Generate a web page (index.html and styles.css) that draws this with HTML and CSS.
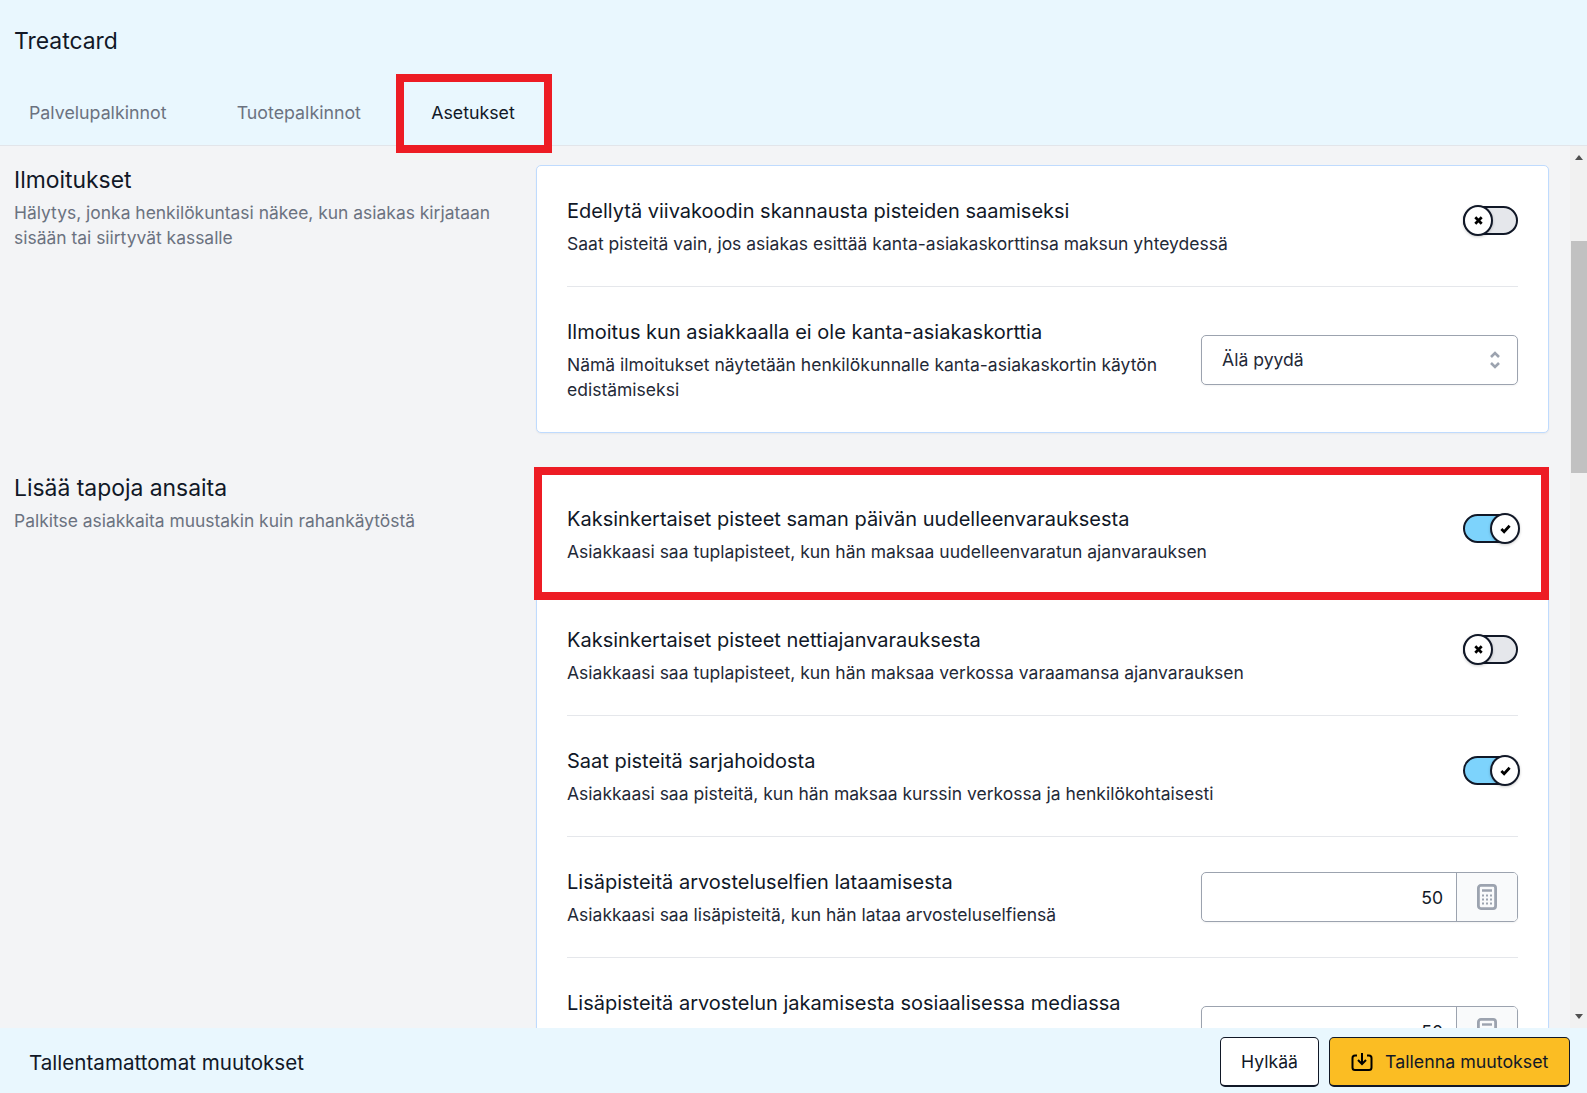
FILE: index.html
```html
<!DOCTYPE html>
<html lang="fi">
<head>
<meta charset="utf-8">
<title>Treatcard</title>
<link rel="stylesheet" href="styles.css">
</head>
<body>
<div class="app">
  <header class="top">
    <h1 class="brand">Treatcard</h1>
    <nav class="tabs">
      <a class="tab">Palvelupalkinnot</a>
      <a class="tab">Tuotepalkinnot</a>
      <a class="tab tab-active">Asetukset<span class="mark mark-tab"></span></a>
    </nav>
  </header>
  <div class="middle">
    <main class="content">
      <section class="section">
        <div class="intro">
          <h2 class="intro-title">Ilmoitukset</h2>
          <p class="intro-text">Hälytys, jonka henkilökuntasi näkee, kun asiakas kirjataan sisään tai siirtyvät kassalle</p>
        </div>
        <div class="card">
          <div class="row">
            <div class="row-text">
              <h3 class="row-title">Edellytä viivakoodin skannausta pisteiden saamiseksi</h3>
              <p class="row-desc">Saat pisteitä vain, jos asiakas esittää kanta-asiakaskorttinsa maksun yhteydessä</p>
            </div>
            <span class="toggle"><span class="knob"><svg class="glyph" viewBox="0 0 12 12"><path d="M2.5 2.5l7 7M9.5 2.5l-7 7"/></svg></span></span>
          </div>
          <div class="row row-last">
            <div class="row-text">
              <h3 class="row-title">Ilmoitus kun asiakkaalla ei ole kanta-asiakaskorttia</h3>
              <p class="row-desc">Nämä ilmoitukset näytetään henkilökunnalle kanta-asiakaskortin käytön edistämiseksi</p>
            </div>
            <div class="select">
              <span>Älä pyydä</span>
              <svg class="chevrons" viewBox="0 0 12 20"><path d="M2 7l4-4 4 4M2 13l4 4 4-4"/></svg>
            </div>
          </div>
        </div>
      </section>
      <section class="section">
        <div class="intro">
          <h2 class="intro-title">Lisää tapoja ansaita</h2>
          <p class="intro-text">Palkitse asiakkaita muustakin kuin rahankäytöstä</p>
        </div>
        <div class="card">
          <div class="row row-marked">
            <span class="mark mark-row"></span>
            <div class="row-text">
              <h3 class="row-title">Kaksinkertaiset pisteet saman päivän uudelleenvarauksesta</h3>
              <p class="row-desc">Asiakkaasi saa tuplapisteet, kun hän maksaa uudelleenvaratun ajanvarauksen</p>
            </div>
            <span class="toggle toggle-on"><span class="knob"><svg class="glyph" viewBox="0 0 12 12"><path d="M1.5 6.5l3 3 6-6.5"/></svg></span></span>
          </div>
          <div class="row">
            <div class="row-text">
              <h3 class="row-title">Kaksinkertaiset pisteet nettiajanvarauksesta</h3>
              <p class="row-desc">Asiakkaasi saa tuplapisteet, kun hän maksaa verkossa varaamansa ajanvarauksen</p>
            </div>
            <span class="toggle"><span class="knob"><svg class="glyph" viewBox="0 0 12 12"><path d="M2.5 2.5l7 7M9.5 2.5l-7 7"/></svg></span></span>
          </div>
          <div class="row">
            <div class="row-text">
              <h3 class="row-title">Saat pisteitä sarjahoidosta</h3>
              <p class="row-desc">Asiakkaasi saa pisteitä, kun hän maksaa kurssin verkossa ja henkilökohtaisesti</p>
            </div>
            <span class="toggle toggle-on"><span class="knob"><svg class="glyph" viewBox="0 0 12 12"><path d="M1.5 6.5l3 3 6-6.5"/></svg></span></span>
          </div>
          <div class="row">
            <div class="row-text">
              <h3 class="row-title">Lisäpisteitä arvosteluselfien lataamisesta</h3>
              <p class="row-desc">Asiakkaasi saa lisäpisteitä, kun hän lataa arvosteluselfiensä</p>
            </div>
            <div class="field">
              <span class="field-value">50</span>
              <span class="field-addon"><svg class="calc" viewBox="0 0 20 26"><rect x="1.4" y="1.4" width="17.2" height="23.2" rx="2.5"/><path class="calc-bar" d="M5 6.5h10"/><path class="calc-dots" d="M5 11.5h2M9 11.5h2M13 11.5h2M5 15.5h2M9 15.5h2M13 15.5h2M5 19.5h2M9 19.5h2M13 19.5h2"/></svg></span>
            </div>
          </div>
          <div class="row">
            <div class="row-text">
              <h3 class="row-title">Lisäpisteitä arvostelun jakamisesta sosiaalisessa mediassa</h3>
            </div>
            <div class="field field-low">
              <span class="field-value">50</span>
              <span class="field-addon"><svg class="calc" viewBox="0 0 20 26"><rect x="1.4" y="1.4" width="17.2" height="23.2" rx="2.5"/><path class="calc-bar" d="M5 6.5h10"/><path class="calc-dots" d="M5 11.5h2M9 11.5h2M13 11.5h2M5 15.5h2M9 15.5h2M13 15.5h2M5 19.5h2M9 19.5h2M13 19.5h2"/></svg></span>
            </div>
          </div>
        </div>
      </section>
    </main>
    <aside class="scrollbar">
      <span class="arrow arrow-up"></span>
      <span class="thumb"></span>
      <span class="arrow arrow-down"></span>
    </aside>
  </div>
  <footer class="bottom">
    <span class="bottom-text">Tallentamattomat muutokset</span>
    <div class="actions">
      <button class="btn">Hylkää</button>
      <button class="btn btn-primary">
        <svg class="save" viewBox="0 0 22 20"><path d="M6 3.5H4a2.5 2.5 0 0 0-2.5 2.5v9.5A2.5 2.5 0 0 0 4 18h14a2.5 2.5 0 0 0 2.5-2.5V6A2.5 2.5 0 0 0 18 3.5h-2"/><path d="M11 1v10M7 8l4 4 4-4"/></svg>
        Tallenna muutokset
      </button>
    </div>
  </footer>
</div>
</body>
</html>
```
FILE: styles.css
```css
* { box-sizing: border-box; }
html, body { margin: 0; height: 100%; overflow: hidden; }
body { font-family: Inter, "Noto Sans", sans-serif; color: #111827; background: #f3f4f6; }
h1, h2, h3, p { margin: 0; font-weight: 400; }

.app { height: 100vh; display: flex; flex-direction: column; }

.top { height: 146px; flex: none; background: #e9f7fe; border-bottom: 1px solid #e2e5ea; padding: 0 0 0 14px; display: flex; flex-direction: column; }
.brand { font-size: 22.9px; line-height: 28px; margin-top: 26.5px; }
.tabs { display: flex; gap: 14.2px; margin: 27.5px 0 0 -13px; }
.tab { position: relative; font-size: 17.8px; line-height: 28px; padding: 0 28px; color: #6b7280; white-space: nowrap; height: 63px; padding-top: 17px; }
.tab-active { color: #111827; }

.mark { position: absolute; border: 8px solid #ed1c24; pointer-events: none; z-index: 2; }
.mark-tab { left: -7px; right: -9px; top: -8px; bottom: -8px; }

.middle { flex: 1; min-height: 0; display: flex; overflow: hidden; }
.content { flex: 1; min-width: 0; overflow: hidden; padding: 19px 21px 0 14px; }
.scrollbar { width: 17px; flex: none; background: #f1f1f1; display: flex; flex-direction: column; align-items: flex-end; position: relative; }
.thumb { width: 16px; height: 232px; background: #c1c1c1; margin-top: 95px; }
.arrow { position: absolute; left: 5px; width: 0; height: 0; border-left: 4.5px solid transparent; border-right: 4.5px solid transparent; }
.arrow-up { top: 9px; border-bottom: 5px solid #505050; }
.arrow-down { bottom: 9px; border-top: 5px solid #505050; }

.section { display: grid; grid-template-columns: 522px 1fr; margin-bottom: 40px; }
.intro { padding-right: 30px; }
.intro-title { font-size: 22.9px; line-height: 30px; }
.intro-text { font-size: 17.45px; line-height: 24.64px; color: #6b7280; margin-top: 6px; }

.card { background: #fff; border: 1px solid #bfdbfe; border-radius: 5px; padding: 0 30px; box-shadow: 0 1px 2px rgba(0,0,0,.05); }
.row { display: flex; align-items: flex-start; justify-content: space-between; gap: 40px; height: 121px; border-bottom: 1px solid #e5e7eb; }
.row-last { border-bottom: 0; height: 145px; }
.row-marked { position: relative; background: #fff; }
.mark-row { left: -33px; right: -31px; top: -7px; bottom: -6px; }
.row-text { flex: 1; min-width: 0; margin-top: 32px; }
.row-title { font-size: 20px; line-height: 26px; }
.row-desc { font-size: 17.5px; line-height: 24.64px; color: #1f2937; margin-top: 8px; }

.toggle { position: relative; flex: none; width: 55px; height: 29px; margin-top: 40px; border: 2px solid #111827; border-radius: 15px; background: #e5e7eb; }
.toggle-on { background: #7dd3fc; }
.knob { position: absolute; left: -2px; top: -3px; width: 30px; height: 31px; border-radius: 50%; border: 2px solid #111827; background: #fff; display: flex; align-items: center; justify-content: center; box-shadow: 0 1px 3px rgba(0,0,0,.2); }
.toggle-on .knob { left: 25px; }
.glyph { width: 11px; height: 11px; fill: none; stroke: #000; stroke-width: 3; }

.select { flex: none; width: 317px; height: 50px; margin-top: 48px; border: 1px solid #9ca3af; border-radius: 5px; padding: 0 16px 2px 20px; display: flex; align-items: center; justify-content: space-between; font-size: 17.6px; color: #1f2937; box-shadow: 0 1px 2px rgba(0,0,0,.05); }
.chevrons { width: 12px; height: 20px; fill: none; stroke: #9ca3af; stroke-width: 2.6; margin-top: 2px; }

.field { flex: none; width: 317px; height: 50px; margin-top: 35px; border: 1px solid #9ca3af; border-radius: 5px; display: flex; overflow: hidden; font-size: 17.6px; box-shadow: 0 1px 2px rgba(0,0,0,.05); }
.field-value { flex: 1; display: flex; align-items: center; justify-content: flex-end; padding-right: 13px; }
.field-addon { width: 61px; flex: none; border-left: 1px solid #9ca3af; background: #f9fafb; display: flex; align-items: center; justify-content: center; }
.field-low { margin-top: 48px; }
.calc { width: 20px; height: 26px; fill: none; stroke: #9ca3af; stroke-width: 2.8; }
.calc-bar { stroke-width: 2.4; }
.calc-dots { stroke-width: 2; }

.bottom { height: 65px; flex: none; background: #e9f7fe; display: flex; align-items: center; justify-content: space-between; padding: 2px 17px 0 29px; position: relative; z-index: 3; }
.bottom-text { font-size: 20.6px; margin-top: 2px; }
.actions { display: flex; gap: 10px; }
.btn { height: 50px; width: 99px; border: 1px solid #111827; border-bottom-width: 2px; border-radius: 5px; background: #fff; font: 400 17.6px Inter, sans-serif; color: #111827; display: flex; align-items: center; justify-content: center; gap: 12px; padding: 1px 0 0; }
.btn-primary { width: 241px; font-size: 17.8px; background: #fbbd23; justify-content: flex-start; padding-left: 21px; }
.save { width: 22px; height: 20px; fill: none; stroke: #000; stroke-width: 2; }
```
